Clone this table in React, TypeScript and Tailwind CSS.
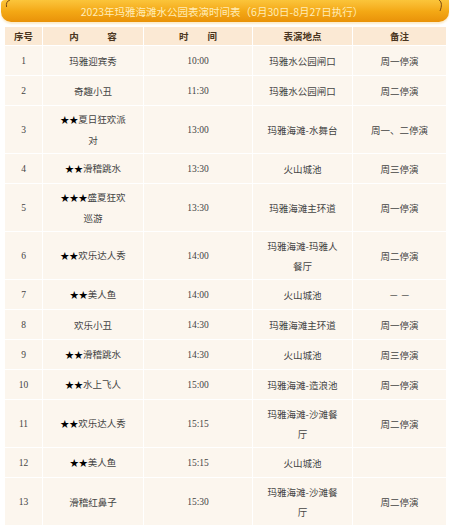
import React from "react";

type Row = { no: string; content: string[]; time: string; place: string[]; note: string; tall?: boolean };

const rows: Row[] = [
  { no: "1", content: ["玛雅迎宾秀"], time: "10:00", place: ["玛雅水公园闸口"], note: "周一停演" },
  { no: "2", content: ["奇趣小丑"], time: "11:30", place: ["玛雅水公园闸口"], note: "周二停演" },
  { no: "3", content: ["★★夏日狂欢派", "对"], time: "13:00", place: ["玛雅海滩-水舞台"], note: "周一、二停演", tall: true },
  { no: "4", content: ["★★滑稽跳水"], time: "13:30", place: ["火山城池"], note: "周三停演" },
  { no: "5", content: ["★★★盛夏狂欢", "巡游"], time: "13:30", place: ["玛雅海滩主环道"], note: "周一停演", tall: true },
  { no: "6", content: ["★★欢乐达人秀"], time: "14:00", place: ["玛雅海滩-玛雅人", "餐厅"], note: "周二停演", tall: true },
  { no: "7", content: ["★★美人鱼"], time: "14:00", place: ["火山城池"], note: "－ －" },
  { no: "8", content: ["欢乐小丑"], time: "14:30", place: ["玛雅海滩主环道"], note: "周一停演" },
  { no: "9", content: ["★★滑稽跳水"], time: "14:30", place: ["火山城池"], note: "周三停演" },
  { no: "10", content: ["★★水上飞人"], time: "15:00", place: ["玛雅海滩-造浪池"], note: "周一停演" },
  { no: "11", content: ["★★欢乐达人秀"], time: "15:15", place: ["玛雅海滩-沙滩餐", "厅"], note: "周二停演", tall: true },
  { no: "12", content: ["★★美人鱼"], time: "15:15", place: ["火山城池"], note: "" },
  { no: "13", content: ["滑稽红鼻子"], time: "15:30", place: ["玛雅海滩-沙滩餐", "厅"], note: "周二停演", tall: true },
];

const cjk = { fontFamily: '"Noto Sans CJK SC", "Noto Sans", sans-serif' };
const num = { fontFamily: '"Liberation Serif", "Noto Sans CJK SC", serif' };

function Cell({ children, tall, font }: { children: React.ReactNode; tall?: boolean; font?: React.CSSProperties }) {
  return (
    <div
      className={`flex flex-col items-center justify-center bg-[#fcf6ee] text-[9.5px] leading-[20px] text-[#444] ${tall ? "h-[47px]" : "h-[29px]"}`}
      style={font ?? cjk}
    >
      {children}
    </div>
  );
}

export default function App() {
  return (
    <div className="w-[450px] h-[525px] bg-white overflow-hidden relative">
      {/* banner */}
      <div className="relative h-[22px] mx-[1px] rounded-b-[10px] rounded-tl-[4px] bg-gradient-to-b from-[#fbc53a] via-[#f4a915] to-[#e99208] shadow-[0_2px_2px_#fbeccd] flex items-center justify-center">
        <span className="text-[10.5px] text-[#ffecb8] pt-[2px] pr-[6px]" style={cjk}>
          2023年玛雅海滩水公园表演时间表（6月30日-8月27日执行）
        </span>
        <svg className="absolute left-[3px] top-0" width="8" height="8" viewBox="0 0 8 8">
          <path d="M6 0 C3 1 2 3 2.5 7" stroke="#7a4a12" strokeWidth="1" fill="none" />
        </svg>
        <svg className="absolute right-[4px] top-0" width="8" height="12" viewBox="0 0 8 12">
          <path d="M2 0 C5 2 5 6 3 11" stroke="#7a4a12" strokeWidth="1" fill="none" />
        </svg>
      </div>

      {/* table */}
      <div className="mt-[5px] ml-[5px] w-[441px] grid grid-cols-[37px_100px_108px_99px_93px] gap-[1px] bg-white">
        {["序号", "内\u3000\u3000\u3000容", "时\u3000\u3000间", "表演地点", "备注"].map((h) => (
          <div
            key={h}
            className="h-[18px] flex items-center justify-center bg-[#fbe9d4] text-[9.5px] font-bold text-[#4a3520]"
            style={cjk}
          >
            {h}
          </div>
        ))}
        {rows.map((r) => (
          <React.Fragment key={r.no}>
            <Cell tall={r.tall} font={num}>{r.no}</Cell>
            <Cell tall={r.tall}>
              {r.content.map((t, i) => (
                <span key={i}>
                  {t.split(/(★+)/).map((p, j) =>
                    p.startsWith("★") ? (
                      <span key={j} className="text-black text-[9px]">{p}</span>
                    ) : (
                      <span key={j}>{p}</span>
                    )
                  )}
                </span>
              ))}
            </Cell>
            <Cell tall={r.tall} font={num}>{r.time}</Cell>
            <Cell tall={r.tall}>
              {r.place.map((t, i) => (
                <span key={i}>{t}</span>
              ))}
            </Cell>
            <Cell tall={r.tall}>{r.note}</Cell>
          </React.Fragment>
        ))}
      </div>
    </div>
  );
}
